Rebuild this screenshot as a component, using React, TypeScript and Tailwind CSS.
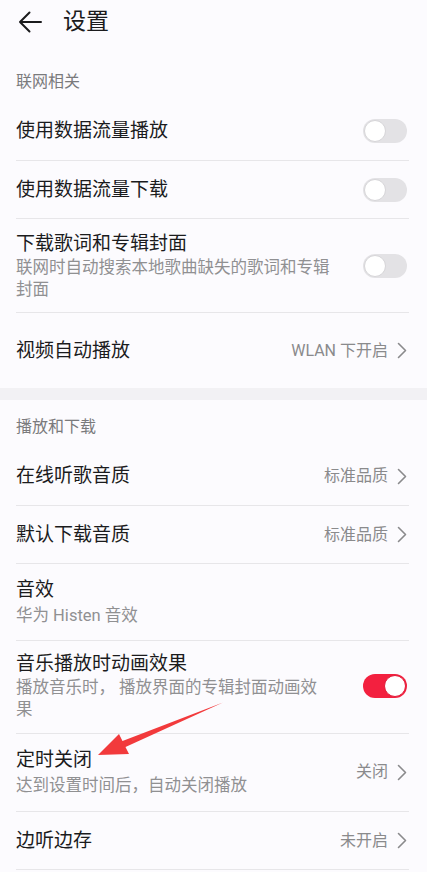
import React from "react";

const font = "font-['Roboto','Noto_Sans_CJK_SC',sans-serif]";

function Chevron() {
  return (
    <svg width="10" height="17" viewBox="0 0 10 17" className="shrink-0">
      <polyline points="1.5,1.5 8.5,8.5 1.5,15.5" fill="none" stroke="#8a8a8c" strokeWidth="1.6" strokeLinecap="round" strokeLinejoin="round" />
    </svg>
  );
}

function Toggle({ on = false }: { on?: boolean }) {
  return on ? (
    <div className="flex h-[24px] w-[44px] shrink-0 items-center justify-end rounded-full bg-[#f3203f] p-[1px]">
      <div className="h-[22px] w-[22px] rounded-full border border-[#e01a38] bg-white" />
    </div>
  ) : (
    <div className="flex h-[24px] w-[44px] shrink-0 items-center rounded-full bg-[#e3e2e5] p-[1px]">
      <div className="h-[22px] w-[22px] rounded-full border border-[#d6d5d8] bg-white" />
    </div>
  );
}

function Value({ text }: { text: string }) {
  return (
    <div className="flex shrink-0 items-center gap-[9px] text-[16px] text-[#8a8a8c]">
      <span>{text}</span>
      <Chevron />
    </div>
  );
}

function Divider() {
  return <div className="mx-4 mr-[18px] h-px bg-[#e7e6e9]" />;
}

function SimpleRow({ title, right, h }: { title: string; right: React.ReactNode; h: string }) {
  return (
    <div className={`flex items-center justify-between pl-4 pr-[20px] ${h}`}>
      <span className="text-[19px] leading-[26px] text-[#1b1b1d]">{title}</span>
      {right}
    </div>
  );
}

export default function App() {
  return (
    <div className={`relative h-[872px] w-full overflow-hidden bg-[#fcfbfe] ${font}`}>
      {/* header */}
      <div className="flex h-[44px] items-center pl-[18px]">
        <svg width="24" height="22" viewBox="0 0 24 22">
          <path d="M23 11H2M11.5 1.5 2 11l9.5 9.5" fill="none" stroke="#1b1b1d" strokeWidth="2" strokeLinecap="round" strokeLinejoin="round" />
        </svg>
        <span className="ml-[21px] text-[23px] leading-[30px] text-[#1b1b1d]">设置</span>
      </div>

      {/* 联网相关 */}
      <div className="pl-4 pt-[28px] pb-[10px] text-[16px] leading-[20px] text-[#7a7a7c]">联网相关</div>
      <SimpleRow title="使用数据流量播放" right={<Toggle />} h="h-[58px]" />
      <Divider />
      <SimpleRow title="使用数据流量下载" right={<Toggle />} h="h-[57px]" />
      <Divider />
      <div className="flex items-center justify-between pl-4 pr-[20px] pt-[12px] pb-[11px]">
        <div>
          <div className="text-[19px] leading-[26px] text-[#1b1b1d]">下载歌词和专辑封面</div>
          <div className="text-[16.5px] leading-[22px] text-[#909092]">
            联网时自动搜索本地歌曲缺失的歌词和专辑
            <br />
            封面
          </div>
        </div>
        <Toggle />
      </div>
      <Divider />
      <SimpleRow title="视频自动播放" right={<Value text="WLAN 下开启" />} h="h-[75px]" />

      <div className="h-[12px] bg-[#f2f1f4]" />

      {/* 播放和下载 */}
      <div className="pl-4 pt-[17px] pb-[10px] text-[16px] leading-[20px] text-[#7a7a7c]">播放和下载</div>
      <SimpleRow title="在线听歌音质" right={<Value text="标准品质" />} h="h-[58px]" />
      <Divider />
      <SimpleRow title="默认下载音质" right={<Value text="标准品质" />} h="h-[57px]" />
      <Divider />
      <div className="pl-4 pr-[20px] pt-[12px] pb-[12px]">
        <div className="text-[19px] leading-[28px] text-[#1b1b1d]">音效</div>
        <div className="text-[16.5px] leading-[24px] text-[#909092]">华为 Histen 音效</div>
      </div>
      <Divider />
      <div className="flex items-center justify-between pl-4 pr-[20px] pt-[10px] pb-[12px]">
        <div>
          <div className="text-[19px] leading-[26px] text-[#1b1b1d]">音乐播放时动画效果</div>
          <div className="text-[16.5px] leading-[22px] text-[#909092]">
            播放音乐时， 播放界面的专辑封面动画效
            <br />果
          </div>
        </div>
        <Toggle on />
      </div>
      <Divider />
      <div className="flex items-center justify-between pl-4 pr-[20px] pt-[12px] pb-[13px]">
        <div>
          <div className="text-[19px] leading-[28px] text-[#1b1b1d]">定时关闭</div>
          <div className="text-[16.5px] leading-[24px] text-[#909092]">达到设置时间后，自动关闭播放</div>
        </div>
        <Value text="关闭" />
      </div>
      <Divider />
      <SimpleRow title="边听边存" right={<Value text="未开启" />} h="h-[57px]" />
      <Divider />

      {/* annotation arrow */}
      <svg className="pointer-events-none absolute left-0 top-0" width="427" height="872">
        <polygon points="98,755 119,734 122.5,741 223,702.5 125.5,747 129,754" fill="#f23a3c" />
      </svg>
    </div>
  );
}
